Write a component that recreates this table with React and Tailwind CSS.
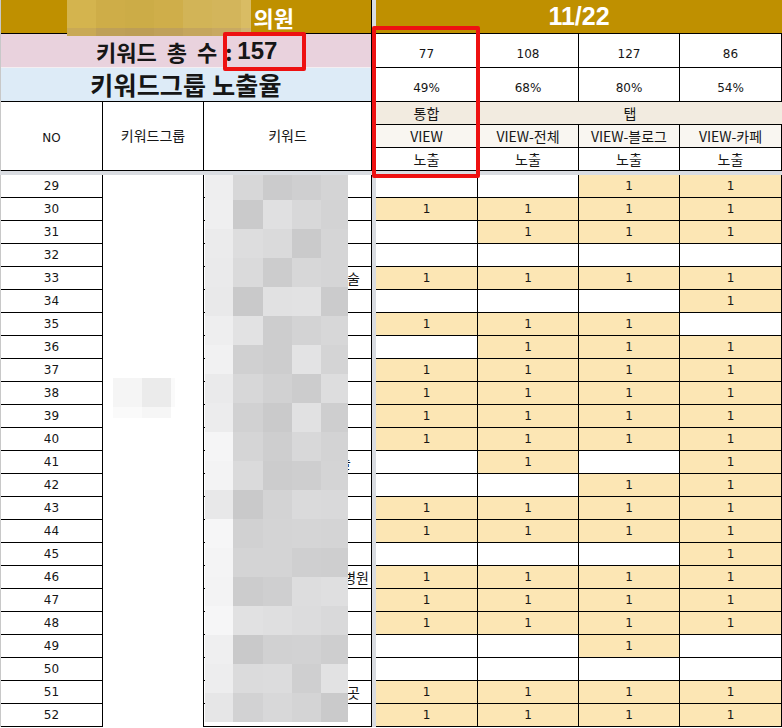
import React from "react";

const RIGHT = [
  [0, 0, 1, 1], [1, 1, 1, 1], [0, 1, 1, 1], [0, 0, 0, 0], [1, 1, 1, 1], [0, 0, 0, 1],
  [1, 1, 1, 0], [0, 1, 1, 1], [1, 1, 1, 1], [1, 1, 1, 1], [1, 1, 1, 1], [1, 1, 1, 1],
  [0, 1, 0, 1], [0, 0, 1, 1], [1, 1, 1, 1], [1, 1, 1, 1], [0, 0, 0, 1], [1, 1, 1, 1],
  [1, 1, 1, 1], [1, 1, 1, 1], [0, 0, 1, 0], [0, 0, 0, 0], [1, 1, 1, 1], [1, 1, 1, 1],
];

const FRAGS = {
  33: { t: "술", pr: "pr-[11px]" },
  41: { t: "술", pr: "pr-[20px]" },
  46: { t: "병원", pr: "pr-[2px]" },
  51: { t: "곳", pr: "pr-[11px]" },
};

// deterministic mosaic shades
function shades() {
  let s = 7;
  const rnd = () => {
    s = (s * 9301 + 49297) % 233280;
    return s / 233280;
  };
  const rows = [];
  for (let r = 0; r < 19; r++) {
    const row = [];
    for (let c = 0; c < 5; c++) {
      const v = c === 0 ? 230 + Math.round(rnd() * 17) : 200 + Math.round(rnd() * 27);
      row.push(`rgb(${v},${v},${v + 1})`);
    }
    rows.push(row);
  }
  return rows;
}
const MOSAIC = shades();
const MW = [28, 30, 29, 29, 27];

const TOP_BLUR = [
  { w: 29, top: "#d4b44e", bot: "#c9a955" },
  { w: 29, top: "#cead48", bot: "#bfa057" },
  { w: 29, top: "#ccac47", bot: "#bd9e56" },
  { w: 29, top: "#cfae4a", bot: "#c0a15a" },
  { w: 29, top: "#d2b457", bot: "#c5a65d" },
  { w: 29, top: "#d3b55b", bot: "#c8a962" },
  { w: 10, top: "#d9bc64", bot: "#cfb270" },
];

const num = "font-['DejaVu_Sans',sans-serif]";

export default function App() {
  const rows = Array.from({ length: 24 }, (_, i) => 29 + i);
  return (
    <div className="relative w-[782px] h-[728px] overflow-hidden bg-white text-[#161616] font-['Noto_Sans_CJK_KR',sans-serif]">
      {/* HEADER */}
      <div className="flex h-[171px]">
        <div className="relative w-[372px] flex flex-col border-r border-black border-l border-l-[#c8c8c8]">
          <div className="h-[34px] bg-[#bf9000] border-b border-black flex items-center justify-end pr-[77px] text-white font-bold text-[22px] leading-none">
            의원
          </div>
          <div className="h-[34px] bg-[#e9d2dd] border-b border-[#f4eef1] flex items-center pl-[95px] font-bold leading-none">
            <span className="text-[22px] [word-spacing:5px]">키워드 총 수</span>
            <span className="ml-[8px] text-[22px]">:</span>
            <span className="ml-[5px] text-[24px] font-['Liberation_Sans',sans-serif]">157</span>
          </div>
          <div className="h-[34px] bg-[#ddebf7] border-b border-black flex items-center justify-center font-bold text-[25px] tracking-[0.2px] leading-none">
            키워드그룹 노출율
          </div>
          <div className="flex flex-1 border-b border-black text-[14px]">
            <div className={`w-[102px] border-r border-black flex items-center justify-center pt-[3px] text-[12px] ${num}`}>NO</div>
            <div className="w-[101px] border-r border-black flex items-center justify-center pb-[1px]">키워드그룹</div>
            <div className="flex-1 flex items-center justify-center pb-[1px]">키워드</div>
          </div>
          {/* blurred title start */}
          <div className="absolute left-[66px] top-0 flex flex-col">
            <div className="flex h-[28px]">
              {TOP_BLUR.map((b, i) => (
                <div key={i} style={{ width: b.w, background: b.top }} />
              ))}
            </div>
            <div className="flex h-[8px]">
              {TOP_BLUR.map((b, i) => (
                <div key={i} style={{ width: b.w, background: b.bot }} />
              ))}
            </div>
          </div>
        </div>
        <div className="w-[4px] bg-[#d9dce1]" />
        <div className="flex-1 flex flex-col">
          <div className="h-[34px] bg-[#bf9000] border-b border-black flex items-center justify-center text-white font-bold text-[25px] leading-none font-['Liberation_Sans',sans-serif]">
            11/22
          </div>
          <div className={`h-[34px] grid grid-cols-[102px_101px_101px_1fr] border-b border-black text-[12px] ${num}`}>
            {["77", "108", "127", "86"].map((v, i) => (
              <div key={i} className="border-r border-black flex items-end justify-center pb-[4px]">{v}</div>
            ))}
          </div>
          <div className={`h-[34px] grid grid-cols-[102px_101px_101px_1fr] border-b border-black text-[12px] ${num}`}>
            {["49%", "68%", "80%", "54%"].map((v, i) => (
              <div key={i} className="border-r border-black flex items-end justify-center pb-[4px]">{v}</div>
            ))}
          </div>
          <div className="h-[23px] grid grid-cols-[102px_1fr] border-b border-black text-[14px] bg-[#f2ebe0]">
            <div className="border-r border-black flex items-center justify-center">통합</div>
            <div className="flex items-center justify-center">탭</div>
          </div>
          <div className="h-[23px] grid grid-cols-[102px_101px_101px_1fr] border-b border-black text-[14px] bg-[#f9f6f1]">
            {["VIEW", "VIEW-전체", "VIEW-블로그", "VIEW-카페"].map((v, i) => (
              <div key={i} className="border-r border-black flex items-center justify-center leading-none">{v}</div>
            ))}
          </div>
          <div className="h-[23px] grid grid-cols-[102px_101px_101px_1fr] border-b border-black text-[14px]">
            {["노출", "노출", "노출", "노출"].map((v, i) => (
              <div key={i} className="border-r border-black flex items-center justify-center leading-none">{v}</div>
            ))}
          </div>
        </div>
      </div>

      {/* frozen divider */}
      <div className="h-[4px] bg-[#d9dce1]" />

      {/* BODY */}
      <div className="flex">
        <div className="w-[372px] flex border-r border-black border-l border-l-[#c8c8c8]">
          <div className={`w-[102px] border-r border-black flex flex-col text-[12px] ${num}`}>
            {rows.map((n) => (
              <div key={n} className="h-[23px] border-b border-black flex items-center justify-center">{n}</div>
            ))}
          </div>
          <div className="relative w-[101px] border-r border-black">
            <div className="absolute left-[10px] top-[203px] flex flex-col">
              <div className="flex h-[29px]">
                <div className="w-[29px] bg-[#f5f5f5]" />
                <div className="w-[29px] bg-[#ebebeb]" />
                <div className="w-[4px] bg-[#fafafa]" />
              </div>
              <div className="flex h-[11px]">
                <div className="w-[29px] bg-[#fafafa]" />
                <div className="w-[29px] bg-[#f6f6f6]" />
              </div>
            </div>
          </div>
          <div className="relative flex-1 flex flex-col text-[14px]">
            {rows.map((n) => (
              <div key={n} className={`h-[23px] border-b border-black flex items-center justify-end leading-none ${FRAGS[n] ? FRAGS[n].pr : ""}`}>
                {FRAGS[n] ? FRAGS[n].t : ""}
              </div>
            ))}
            <div className="absolute left-[1px] top-0 flex flex-col">
              {MOSAIC.map((r, ri) => (
                <div key={ri} className={`flex ${ri === 0 ? "h-[25px]" : "h-[29px]"}`}>
                  {r.map((c, ci) => (
                    <div key={ci} style={{ width: MW[ci], background: c }} />
                  ))}
                </div>
              ))}
            </div>
          </div>
        </div>
        <div className="w-[4px] bg-[#d9dce1]" />
        <div className={`flex-1 flex flex-col text-[12px] ${num}`}>
          {RIGHT.map((r, ri) => (
            <div key={ri} className="h-[23px] grid grid-cols-[102px_101px_101px_1fr] border-b border-black">
              {r.map((v, ci) => (
                <div
                  key={ci}
                  className={`border-r border-black flex items-center justify-center ${v ? "bg-[#fce6b4]" : "bg-white"}`}
                >
                  {v ? "1" : ""}
                </div>
              ))}
            </div>
          ))}
        </div>
      </div>

      {/* red highlight boxes */}
      <div className="absolute left-[223px] top-[32px] w-[83px] h-[39px] border-[4px] border-[#ee1111] rounded-[2px]" />
      <div className="absolute left-[372px] top-[26px] w-[108px] h-[152px] border-[4px] border-[#ee1111] rounded-[2px]" />
    </div>
  );
}
